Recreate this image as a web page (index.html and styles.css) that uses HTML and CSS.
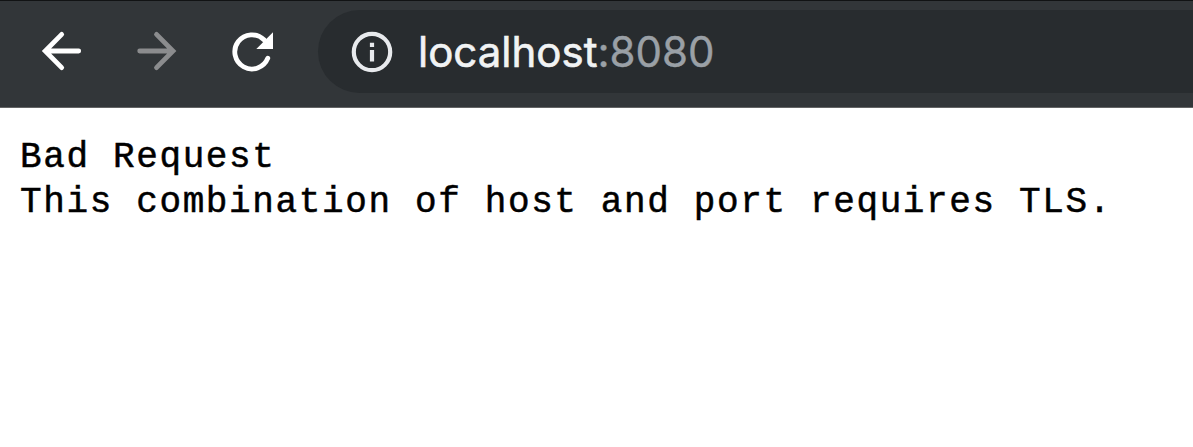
FILE: index.html
```html
<!DOCTYPE html>
<html lang="en">
<head>
<meta charset="utf-8">
<title>localhost:8080</title>
<link rel="stylesheet" href="styles.css">
</head>
<body>
<header class="toolbar">
  <svg class="nav" viewBox="0 0 44 44" aria-label="Back"><path d="M37.7 22H4.5M20.7 5.4L4.2 22L20.7 38.6"/></svg>
  <svg class="nav forward" viewBox="0 0 44 44" aria-label="Forward"><path d="M3.7 22H36.5M20.5 5.4L37 22L20.5 38.6"/></svg>
  <svg class="nav" viewBox="0 0 44 44" aria-label="Reload"><path d="M36.8 29.2A17.1 17.1 0 1 1 33 10.8"/><path class="solid" d="M42 3.3V20H25.3Z"/></svg>
  <div class="address">
    <svg class="info" viewBox="0 0 42 42" aria-label="Site information"><circle cx="21" cy="21" r="18.2"/><path d="M21 19V30.5M21 11.8V16"/></svg>
    <div class="url"><span class="host">localhost</span><span class="port">:8080</span></div>
  </div>
</header>
<pre class="message">Bad Request
This combination of host and port requires TLS.</pre>
</body>
</html>
```
FILE: styles.css
```css
body {
  margin: 0;
  background: #fff;
  overflow: hidden;
}

.toolbar {
  box-sizing: border-box;
  display: flex;
  height: 108px;
  padding: 9px 0 0 41px;
  background: #323639;
  border-top: 1px solid #111314;
  border-bottom: 1px solid #636465;
}

.nav {
  flex: none;
  width: 44px;
  height: 44px;
  margin: 19px 51px 0 0;
  fill: none;
  stroke: #fff;
  stroke-width: 4.8;
  stroke-linecap: round;
}

.forward {
  stroke: #8b8c8e;
}

.solid {
  fill: #fff;
  stroke: none;
}

.address {
  display: flex;
  flex: 1;
  align-items: center;
  height: 83px;
  margin-left: -8px;
  padding-left: 33px;
  background: #282c2f;
  border-radius: 42px 0 0 42px;
}

.info {
  flex: none;
  width: 42px;
  height: 42px;
  margin-right: 25px;
  fill: none;
  stroke: #e8eaed;
  stroke-width: 4.2;
}

.url {
  font: 42px/50px Inter, sans-serif;
  white-space: nowrap;
}

.host {
  color: #f1f3f4;
  -webkit-text-stroke: 0.6px #f1f3f4;
}

.port {
  color: #9aa0a6;
  -webkit-text-stroke: 0.4px #9aa0a6;
}

.message {
  margin: 27px 0 0 20px;
  color: #000;
  font: 36px/45px "Courier", "Liberation Mono", monospace;
  letter-spacing: 1.63px;
  -webkit-text-stroke: 0.5px #000;
}
```
